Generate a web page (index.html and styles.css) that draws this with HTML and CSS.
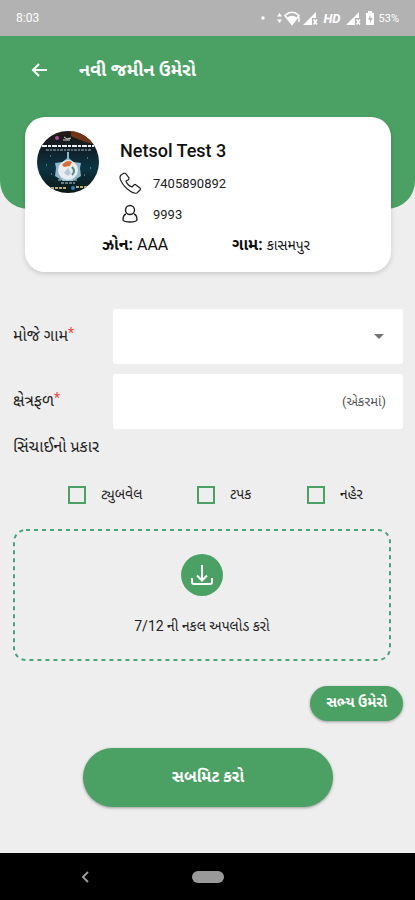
FILE: index.html
```html
<!DOCTYPE html>
<html lang="gu">
  <head>
    <meta charset="utf-8">
    <meta name="viewport" content="width=device-width, initial-scale=1">
    <title>નવી જમીન ઉમેરો</title>
    <link rel="stylesheet" href="styles.css">
  </head>
  <body>
    <div class="status-bar">
      <span class="time">8:03</span>
      <div class="status-icons">
        <svg class="net-icons" width="61" height="18" viewBox="0 0 61 18" fill="#fff">
          <circle cx="5" cy="9" r="1.7" />
          <path d="M19 7.500l2.500-3.500 2.500 3.500zM19 10.500l2.500 3.500 2.500-3.500z" />
          <path d="M27 6.500Q34 0 41 6.500L34 15.500z" fill="none" stroke="#fff" stroke-width="1.500" />
          <path d="M29 8.500Q34 5 39 8.500L34 15z" />
          <path d="M41 8v5" stroke="#fff" stroke-width="1.500" />
          <path d="M45 16L58 3v6h-4v7z" />
          <path d="M55.500 10.500l3.500 5m0-5l-3.500 5" stroke="#fff" stroke-width="1.500" />
        </svg>
        <b class="hd">HD</b>
        <svg width="16" height="18" viewBox="0 0 16 18" fill="#fff">
          <path d="M1 16L14 3v6h-4v7z" />
          <path d="M11.500 10.500l3.500 5m0-5l-3.500 5" stroke="#fff" stroke-width="1.500" />
        </svg>
        <svg width="10" height="18" viewBox="0 0 10 18">
          <path d="M3 2h4v2h2v12H1V4h2z" fill="#fff" />
          <path d="M5.500 6L3 10.500h2V14l2.500-5H5.500z" fill="#b2b2b2" />
        </svg>
        <span>53%</span>
      </div>
    </div>

    <header class="header">
      <a href="#" class="back" aria-label="પાછા">
        <svg width="18" height="18" viewBox="0 0 18 18" fill="none" stroke="#fff" stroke-width="2">
          <path d="M16 9H2M8 3L2 9l6 6" />
        </svg>
      </a>
      <h1>નવી જમીન ઉમેરો</h1>
    </header>

    <main>
      <section class="card">
        <svg class="avatar" viewBox="0 0 62 62">
          <defs>
            <clipPath id="round"><circle cx="31" cy="31" r="31" /></clipPath>
            <linearGradient id="sky" x1="0" y1="0" x2="0" y2="1">
              <stop offset="0" stop-color="#251a16" />
              <stop offset=".25" stop-color="#101c24" />
              <stop offset=".6" stop-color="#0c3442" />
              <stop offset="1" stop-color="#0b1613" />
            </linearGradient>
          </defs>
          <g clip-path="url(#round)">
            <path d="M0 0h62v62H0z" fill="url(#sky)" />
            <path d="M34 0h28v14Q48 12 34 5z" fill="#713515" />
            <circle cx="20" cy="7" r="2" fill="#b14b96" />
            <path d="M27 6l3 2 4-1M26 9h7" stroke="#ddd" fill="none" />
            <path d="M5 15h52" stroke="#eee" stroke-width="2" stroke-dasharray="5 1 3 1" />
            <path d="M9 19h45" stroke="#aab9bd" stroke-dasharray="3 1 2 1" />
            <path d="M31 21v6" stroke="#88b6ca" stroke-width="2" />
            <path d="M26 31l5-5 5 5 8 1-1 5 1 8-8 5H26l-8-5 1-8-1-5z" fill="#8fb6ca" />
            <circle cx="31" cy="39" r="10" fill="#e7edf0" />
            <path d="M25 34q5-6 10-3l-2 4-6 1z" fill="#dd6b38" />
            <path d="M27 42l4-5 3 5-3 3z" fill="#b4c8d8" />
            <path d="M35 36q4 4 0 8" stroke="#568a7e" stroke-width="2" fill="none" />
            <path d="M21 49h20M24 52h14" stroke="#bfd2de" stroke-dasharray="3 1" />
            <path d="M9 34h1M13 25h1M50 27h1M53 37h1M47 44h1M14 43h1" stroke="#91b4bf" stroke-width="1" />
            <path d="M14 57h16M39 56h12" stroke="#b9ad72" stroke-width="2" stroke-dasharray="3 1" />
            <circle cx="36" cy="57" r="2" fill="#2584bd" />
          </g>
        </svg>
        <div class="details">
          <h2>Netsol Test 3</h2>
          <p>
            <svg width="22" height="22" viewBox="0 0 22 22" fill="none" stroke="#222" stroke-width="1.200">
              <path d="M2 3L5 1q1 0 2 1l3 4q0 1-1 2L7 9q1 4 6 6l2-2q1-1 2 0l4 3q1 1 0 2l-3 3q-3 1-7-2-6-4-9-10Q0 5 2 3z" />
            </svg>
            7405890892
          </p>
          <p>
            <svg width="22" height="22" viewBox="0 0 22 22" fill="none" stroke="#222" stroke-width="1.400">
              <circle cx="11" cy="7" r="4.500" />
              <path d="M7 11q-3 1-3 6 1 2 7 2t7-2q0-5-3-6" />
            </svg>
            9993
          </p>
        </div>
        <div class="places">
          <div><b>ઝોન:</b> AAA</div>
          <div><b>ગામ:</b> <span class="place">કાસમપુર</span></div>
        </div>
      </section>

      <form>
        <div class="field">
          <label for="village">મોજે ગામ<i>*</i></label>
          <div class="box">
            <select id="village"><option></option></select>
            <svg class="caret" width="10" height="5" viewBox="0 0 10 5"><path d="M0 0h10L5 5z" fill="#757575" /></svg>
          </div>
        </div>
        <div class="field">
          <label for="area">ક્ષેત્રફળ<i>*</i></label>
          <div class="box">
            <input type="text" id="area">
            <span class="unit">(એકરમાં)</span>
          </div>
        </div>

        <fieldset>
          <legend>સિંચાઈનો પ્રકાર</legend>
          <div class="checks">
            <label><input type="checkbox"> ટ્યુબવેલ</label>
            <label><input type="checkbox"> ટપક</label>
            <label><input type="checkbox"> નહેર</label>
          </div>
        </fieldset>

        <button type="button" class="upload">
          <svg class="dashes"><rect x="1" y="1" rx="12" /></svg>
          <svg width="42" height="42" viewBox="0 0 42 42">
            <circle cx="21" cy="21" r="21" fill="#4ba164" />
            <path d="M21 11v15M16 21.500l5 5 5-5M11 24v4q0 2 2 2h16q2 0 2-2v-4" fill="none" stroke="#fff" stroke-width="2" />
          </svg>
          <span>7/12 ની નકલ અપલોડ કરો</span>
        </button>

        <button type="button" class="btn add">સભ્ય ઉમેરો</button>
        <button type="submit" class="btn submit">સબમિટ કરો</button>
      </form>
    </main>

    <nav class="nav-bar">
      <svg class="nav-back" width="8" height="12" viewBox="0 0 8 12" fill="none" stroke="#999" stroke-width="2"><path d="M7 1L2 6l5 5" /></svg>
      <span class="pill"></span>
    </nav>
  </body>
</html>
```
FILE: styles.css
```css
* {
  box-sizing: border-box;
}

body {
  margin: 0;
  min-height: 100vh;
  display: flex;
  flex-direction: column;
  background: #eee;
  color: #222;
  font-family: Roboto, "Noto Sans Gujarati", "Noto Sans", sans-serif;
  font-size: 16px;
}

button,
input,
select {
  font: inherit;
}

.status-bar {
  height: 36px;
  padding: 0 16px;
  display: flex;
  align-items: center;
  justify-content: space-between;
  background: #b2b2b2;
  color: #fff;
  font-size: 11px;
}

.time {
  font-size: 12px;
}

.status-icons {
  display: flex;
  align-items: center;
  gap: 4px;
}

.hd {
  font-size: 13px;
  font-style: italic;
}

.header {
  height: 173px;
  padding: 20px 31px;
  display: flex;
  align-items: flex-start;
  gap: 30px;
  background: #4ba164;
  border-radius: 0 0 28px 28px;
}

.back {
  height: 28px;
  display: flex;
  align-items: center;
}

h1 {
  margin: 0;
  color: #fff;
  font-size: 18px;
  line-height: 28px;
}

main {
  flex: 1;
}

.card {
  margin: -92px 24px 0 25px;
  padding: 14px 12px 10px;
  min-height: 155px;
  display: grid;
  grid-template-columns: 62px 1fr;
  column-gap: 20px;
  align-content: start;
  position: relative;
  background: #fff;
  border-radius: 20px;
  box-shadow: 0 2px 5px rgba(0, 0, 0, 0.15);
}

.avatar {
  width: 62px;
  height: 62px;
}

h2 {
  margin: 6px 0 4px 1px;
  color: #111;
  font-size: 18px;
  font-weight: 500;
  line-height: 28px;
}

.details p {
  height: 28px;
  margin: 0 0 3px;
  display: flex;
  align-items: center;
  gap: 12px;
  font-size: 13px;
}

.places {
  grid-column: 1 / 3;
  padding-left: 65px;
  display: grid;
  grid-template-columns: 130px 1fr;
  color: #111;
  line-height: 28px;
}

.place {
  font-size: 14px;
}

form {
  padding: 37px 12px 46px 13px;
  display: flex;
  flex-direction: column;
}

.field {
  display: grid;
  grid-template-columns: 100px 1fr;
  align-items: center;
}

.field + .field {
  margin-top: 10px;
}

.field i {
  color: #f44336;
  font-size: 14px;
  font-style: normal;
  line-height: 1;
  vertical-align: 3px;
}

.box {
  position: relative;
}

.box select,
.box input {
  display: block;
  width: 100%;
  height: 55px;
  padding: 0 72px 0 16px;
  border: 0;
  border-radius: 3px;
  background: #fff;
  appearance: none;
}

.caret {
  position: absolute;
  top: 25px;
  right: 19px;
  pointer-events: none;
}

.unit {
  position: absolute;
  top: 0;
  right: 17px;
  color: #555;
  font-size: 13px;
  line-height: 55px;
}

fieldset {
  margin: 8px 0 0;
  padding: 0;
  border: 0;
}

legend {
  padding: 0;
  line-height: 20px;
}

.checks {
  padding: 29px 0 25px 55px;
  display: flex;
}

.checks label {
  display: flex;
  align-items: center;
  gap: 15px;
  flex: 0 0 129px;
  height: 18px;
  font-size: 14px;
}

.checks label:nth-child(2) {
  flex-basis: 110px;
}

.checks label:last-child {
  flex: 1;
}

.checks input {
  width: 18px;
  height: 18px;
  margin: 0;
  appearance: none;
  border: 2px solid #4ba164;
}

.checks input:checked {
  background: #4ba164;
}

.upload {
  position: relative;
  height: 132px;
  margin-right: 12px;
  padding: 25px 0 0;
  display: flex;
  flex-direction: column;
  align-items: center;
  gap: 16px;
  border: 0;
  background: none;
  color: #222;
  font-size: 14px;
}

.upload span {
  line-height: 28px;
}

.dashes {
  position: absolute;
  top: 0;
  left: 0;
  width: 100%;
  height: 100%;
}

.dashes rect {
  width: calc(100% - 2px);
  height: calc(100% - 2px);
  fill: none;
  stroke: #4ba17a;
  stroke-width: 2px;
  stroke-dasharray: 4 4;
}

.btn {
  border: 0;
  border-radius: 30px;
  background: #4ba164;
  color: #fff;
  font-weight: bold;
  box-shadow: 0 1px 3px rgba(0, 0, 0, 0.35);
}

.add {
  align-self: flex-end;
  height: 35px;
  margin: 25px 0 27px;
  padding: 0 16px;
  font-size: 14px;
}

.submit {
  align-self: center;
  width: 64%;
  height: 59px;
}

.nav-bar {
  height: 47px;
  display: grid;
  grid-template-columns: 1fr 32px 1fr;
  align-items: center;
  background: #000;
}

.nav-back {
  margin-left: 81px;
}

.pill {
  height: 12px;
  border-radius: 6px;
  background: #999;
}
```
